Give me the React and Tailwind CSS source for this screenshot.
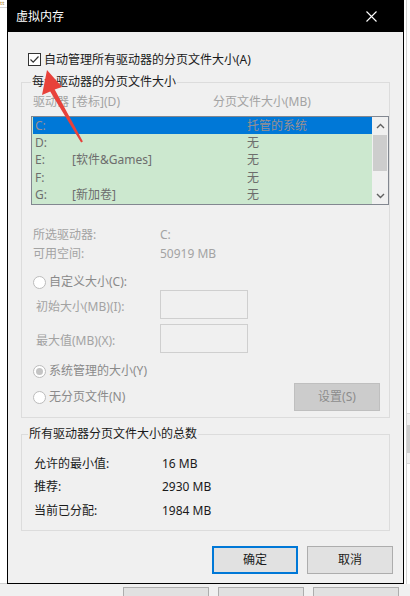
import React from 'react'

const drives = [
    { letter: 'C:', label: '', size: '托管的系统', selected: true },
    { letter: 'D:', label: '', size: '无' },
    { letter: 'E:', label: '[软件&Games]', size: '无' },
    { letter: 'F:', label: '', size: '无' },
    { letter: 'G:', label: '[新加卷]', size: '无' },
]

const totals = [
    { label: '允许的最小值:', value: '16 MB' },
    { label: '推荐:', value: '2930 MB' },
    { label: '当前已分配:', value: '1984 MB' },
]

function Radio({ checked, label }) {
    return (
        <div className="flex items-center gap-[3px]">
            <span className="w-[13px] h-[13px] rounded-full border border-[#bcbcbc] bg-white flex items-center justify-center">
                {checked && <span className="w-[7px] h-[7px] rounded-full bg-[#c4c4c4]" />}
            </span>
            <span className="text-[#8a8a8a] leading-[16px]">{label}</span>
        </div>
    )
}

function SizeInput({ label }) {
    return (
        <div className="flex items-center h-[29px] pl-[3px]">
            <span className="w-[124px] pt-[5px] leading-[16px] text-[#a3a3a3]">{label}</span>
            <div className="w-[88px] h-[29px] border border-[#cfcfcf] bg-[#f0f0f0]" />
        </div>
    )
}

function Chevron({ up }) {
    return (
        <svg width="9" height="6" viewBox="0 0 9 6" className="text-[#606060]">
            <path d={up ? 'M1 5 L4.5 1.5 L8 5' : 'M1 1 L4.5 4.5 L8 1'} fill="none" stroke="currentColor" strokeWidth="1.4" />
        </svg>
    )
}

export default function App() {
    return (
        <div className="relative w-[410px] h-[596px] overflow-hidden bg-[#f0f0f0] flex flex-col text-[12px] font-['Noto_Sans','Noto_Sans_CJK_SC',sans-serif]">
            <div className="flex h-[588px]">
                {/* desktop behind, left */}
                <div className="w-[7px] flex flex-col">
                    <div className="h-[583px] bg-white">
                        <span className="block text-[6px] leading-[7px] text-[#b08a3a]">tt</span>
                        <div className="h-px bg-[#d4d4d4]" />
                    </div>
                    <div className="h-px bg-[#d0d0d0]" />
                </div>

                {/* dialog */}
                <div className="w-[397px] flex flex-col border-x border-b border-black">
                    <div className="h-[32px] bg-black flex items-center justify-between pl-[8px] pr-[26px]">
                        <span className="text-white leading-[16px] pt-[1px]">虚拟内存</span>
                        <svg width="11" height="11" viewBox="0 0 11 11">
                            <path d="M0.5 0.5 L10.5 10.5 M10.5 0.5 L0.5 10.5" stroke="white" strokeWidth="1.1" />
                        </svg>
                    </div>

                    <div className="flex-1 bg-[#f0f0f0] flex flex-col">
                        {/* auto manage */}
                        <div className="mt-[21px] ml-[20px] flex items-center gap-[3px] h-[13px]">
                            <span className="w-[13px] h-[13px] border border-[#333333] bg-white flex items-center justify-center">
                                <svg width="11" height="11" viewBox="0 0 11 11">
                                    <path d="M1.5 5.5 L4.2 8.2 L9.5 2.5" fill="none" stroke="#333333" strokeWidth="1.2" />
                                </svg>
                            </span>
                            <span className="text-[#1a1a1a] leading-[16px]">自动管理所有驱动器的分页文件大小(A)</span>
                        </div>

                        {/* per drive group */}
                        <div className="relative mt-[16px] mx-[13px] h-[336px] border border-[#dcdcdc] flex flex-col">
                            <span className="absolute left-[9px] -top-[9px] px-[1px] bg-[#f0f0f0] leading-[16px] text-[#1a1a1a]">每个驱动器的分页文件大小</span>

                            <div className="flex pt-[11px] pl-[11px] leading-[16px] text-[#a3a3a3]">
                                <span className="w-[180px]">驱动器 [卷标](D)</span>
                                <span>分页文件大小(MB)</span>
                            </div>

                            <div className="mt-[6px] ml-[9px] w-[358px] h-[89px] border border-[#828790] flex bg-[#cce8cf]">
                                <div className="w-[340px] pl-[1px] flex flex-col">
                                    {drives.map(d => (
                                        <div
                                            key={d.letter}
                                            className={`h-[17.4px] flex items-center leading-[16px] pl-[2px] ${d.selected ? 'bg-[#0078d7] text-[#9a9090]' : 'text-[#6d6d6d]'}`}
                                        >
                                            <span className="w-[37px]">{d.letter}</span>
                                            <span className="w-[175px]">{d.label}</span>
                                            <span>{d.size}</span>
                                        </div>
                                    ))}
                                </div>
                                <div className="w-[16px] bg-[#f0f0f0] flex flex-col">
                                    <div className="h-[18px] flex items-center justify-center"><Chevron up /></div>
                                    <div className="h-[36px] mx-[1px] bg-[#cdcdcd]" />
                                    <div className="flex-1" />
                                    <div className="h-[17px] flex items-center justify-center"><Chevron /></div>
                                </div>
                            </div>

                            <div className="mt-[20px] pl-[11px] leading-[19px] text-[#a3a3a3]">
                                <div className="flex"><span className="w-[127px]">所选驱动器:</span><span>C:</span></div>
                                <div className="flex"><span className="w-[127px]">可用空间:</span><span>50919 MB</span></div>
                            </div>

                            <div className="mt-[11px] pl-[11px] flex flex-col">
                                <Radio label="自定义大小(C):" />
                                <SizeInput label="初始大小(MB)(I):" />
                                <div className="mt-[5px]"><SizeInput label="最大值(MB)(X):" /></div>
                                <div className="mt-[10px]"><Radio checked label="系统管理的大小(Y)" /></div>
                                <div className="mt-[4px] h-[28px] flex items-center justify-between pr-[9px]">
                                    <Radio label="无分页文件(N)" />
                                    <button className="w-[86px] h-[28px] bg-[#cccccc] border border-[#bfbfbf] text-[#8d8d8d] leading-[16px]">设置(S)</button>
                                </div>
                            </div>
                        </div>

                        {/* totals group */}
                        <div className="relative mt-[16px] mx-[13px] h-[97px] border border-[#dcdcdc] flex flex-col">
                            <span className="absolute left-[6px] -top-[9px] px-[1px] bg-[#f0f0f0] leading-[16px] text-[#1a1a1a]">所有驱动器分页文件大小的总数</span>
                            <div className="pt-[17px] pl-[12px] text-[#1a1a1a]">
                                {totals.map(t => (
                                    <div key={t.label} className="flex items-center h-[23.5px] leading-[16px]">
                                        <span className="w-[128px]">{t.label}</span>
                                        <span>{t.value}</span>
                                    </div>
                                ))}
                            </div>
                        </div>

                        {/* buttons */}
                        <div className="mt-[15px] flex justify-end gap-[9px] pr-[10px]">
                            <button className="w-[86px] h-[28px] bg-[#e1e1e1] border-2 border-[#0078d7] text-[#1a1a1a] leading-[16px]">确定</button>
                            <button className="w-[86px] h-[28px] bg-[#e1e1e1] border border-[#adadad] text-[#1a1a1a] leading-[16px]">取消</button>
                        </div>
                    </div>
                </div>

                {/* desktop behind, right */}
                <div className="w-[6px] bg-white flex">
                    <div className="w-[2px]" />
                    <div className="flex-1 border-l border-[#d4d4d4] flex flex-col">
                        <div className="h-[413px]" />
                        <div className="h-px bg-[#d8d8d8]" />
                        <div className="h-[11px] bg-[#f0f0f0]" />
                        <div className="h-[28px] bg-[#cdcdcd]" />
                        <div className="h-[10px] bg-[#f0f0f0]" />
                        <div className="h-px bg-[#d8d8d8]" />
                    </div>
                </div>
            </div>

            {/* bottom edge of window behind */}
            <div className="flex-1 flex gap-[9px] pl-[123px] pt-[3px]">
                <div className="w-[86px] h-[10px] bg-[#e1e1e1] border border-[#adadad]" />
                <div className="w-[86px] h-[10px] bg-[#e1e1e1] border border-[#adadad]" />
                <div className="w-[86px] h-[10px] bg-[#e1e1e1] border border-[#adadad]" />
            </div>

            {/* red annotation arrow */}
            <svg className="absolute left-0 top-0 pointer-events-none" width="410" height="596" viewBox="0 0 410 596">
                <polygon points="47,70 62,87 54.7,89.4 82.9,141.6 81.1,142.4 50.2,91.6 42,95" fill="#e8413a" />
            </svg>
        </div>
    )
}
